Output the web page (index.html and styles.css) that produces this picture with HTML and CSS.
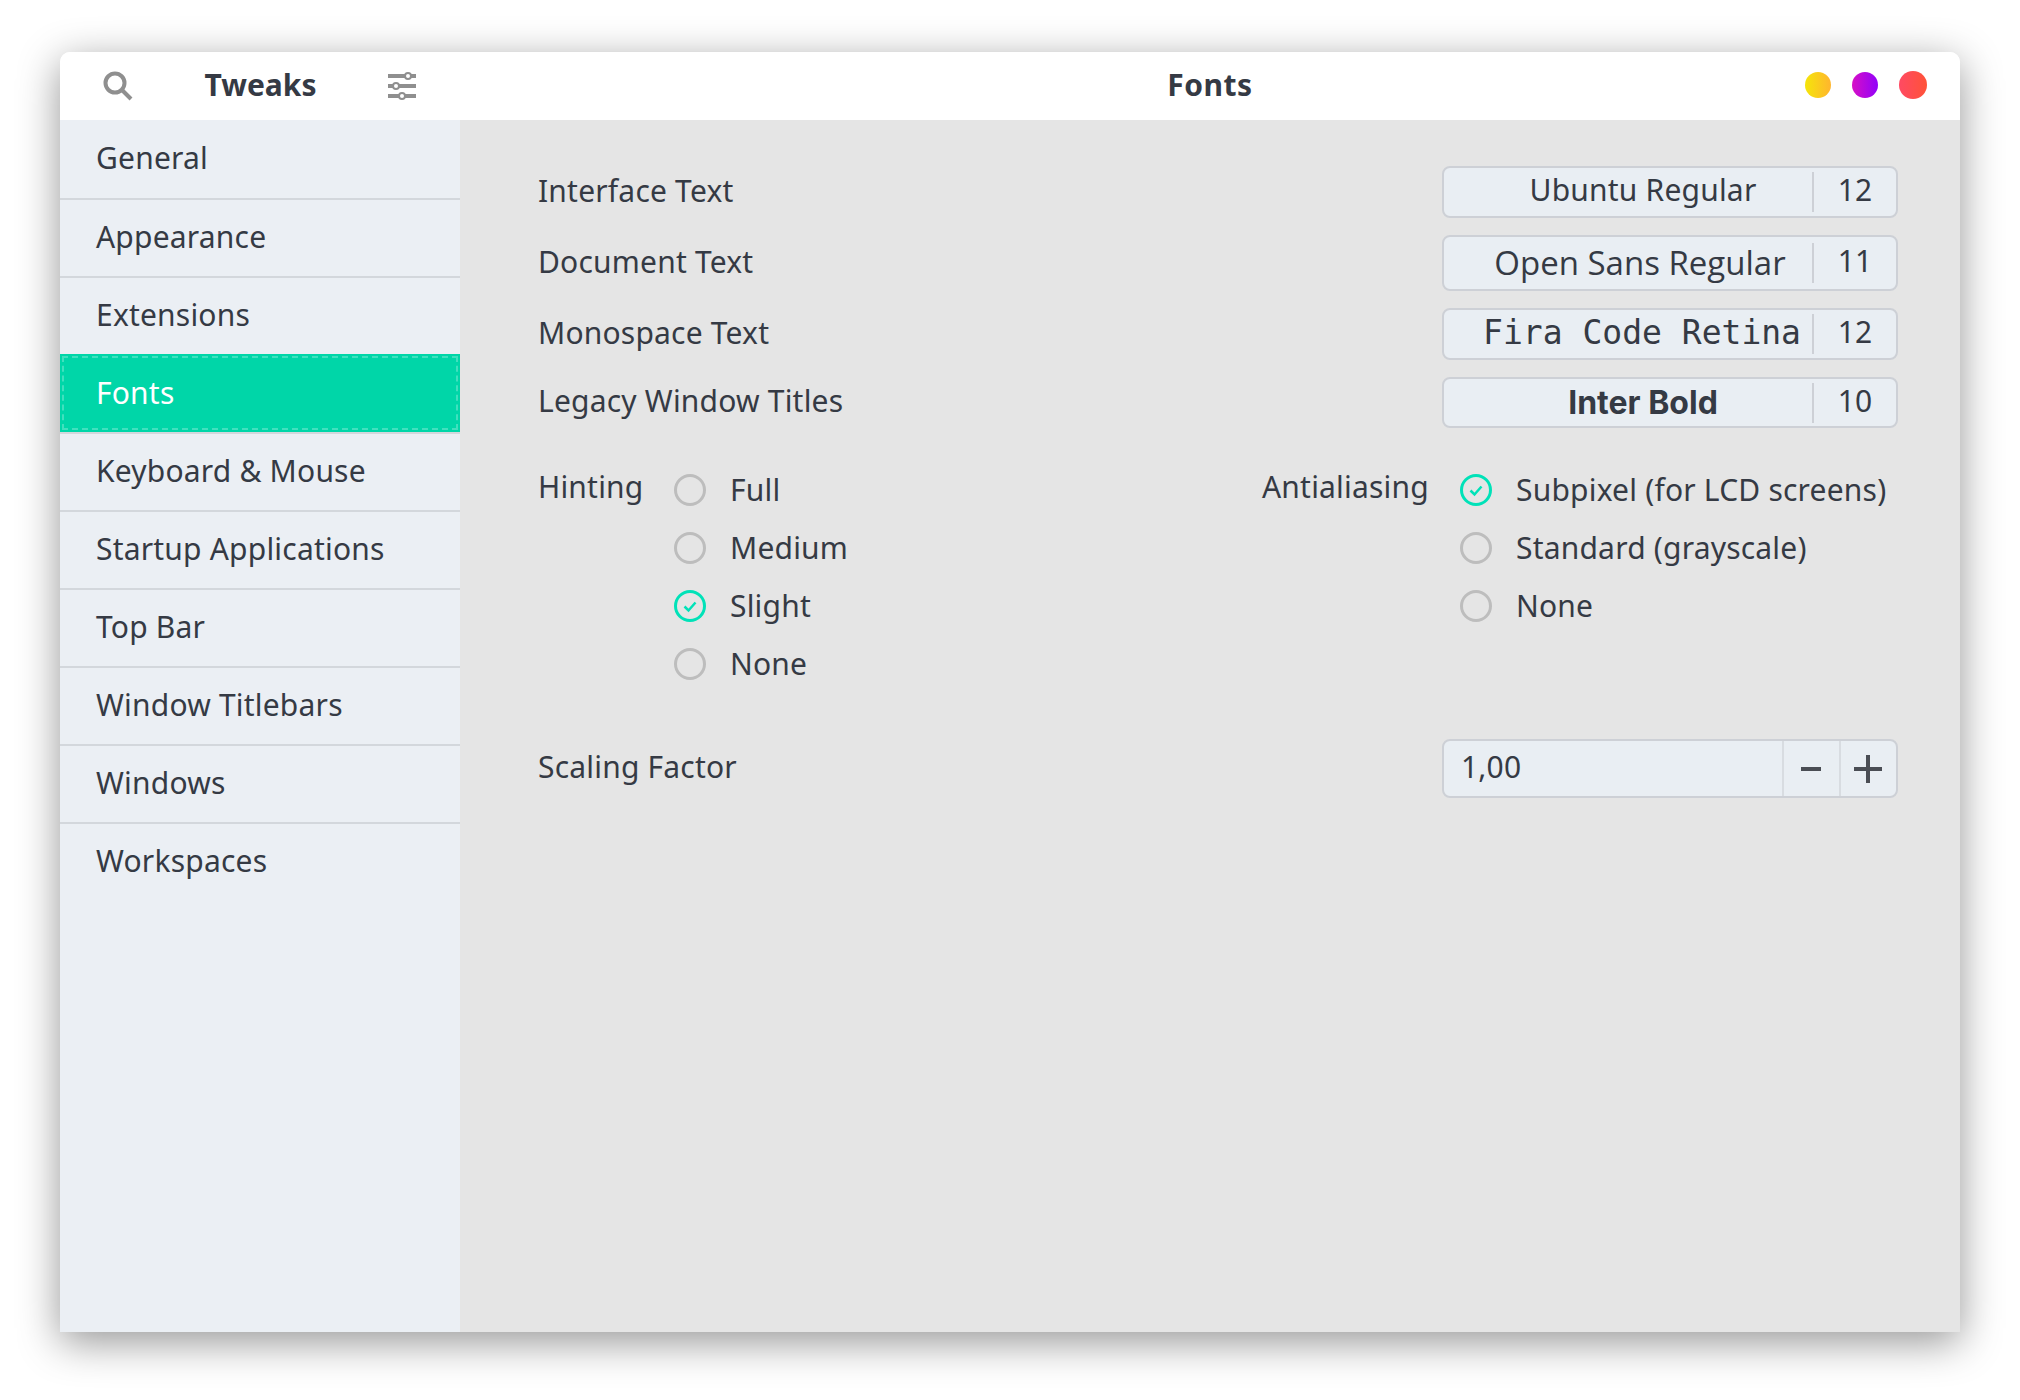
FILE: index.html
```html
<!DOCTYPE html>
<html lang="en">
<head>
  <meta charset="UTF-8">
  <title>Tweaks</title>
  <link rel="stylesheet" href="styles.css">
</head>
<body>
<div class="window">
  <header class="titlebar">
    <div class="titlebar-left">
      <svg class="icon-search" width="30" height="30" viewBox="0 0 30 30">
        <circle cx="12" cy="12" r="9.5" fill="none" stroke="#8f8f8f" stroke-width="4"/>
        <path d="M18.5 18.5L28 28" fill="none" stroke="#8f8f8f" stroke-width="4"/>
      </svg>
      <span class="app-name">Tweaks</span>
      <svg class="icon-sliders" width="28" height="28" viewBox="0 0 28 28">
        <path d="M0 4h28M0 14h28M0 24h28" stroke="#8f8f8f" stroke-width="4"/>
        <circle cx="20" cy="4" r="3" fill="#fff" stroke="#8f8f8f" stroke-width="2"/>
        <circle cx="8" cy="14" r="3" fill="#fff" stroke="#8f8f8f" stroke-width="2"/>
        <circle cx="14" cy="24" r="3" fill="#fff" stroke="#8f8f8f" stroke-width="2"/>
      </svg>
    </div>
    <div class="titlebar-main">
      <span class="page-title">Fonts</span>
      <div class="window-buttons">
        <span class="dot dot-min"></span>
        <span class="dot dot-max"></span>
        <span class="dot dot-close"></span>
      </div>
    </div>
  </header>

  <div class="body">
    <nav class="sidebar">
      <div class="item">General</div>
      <div class="item">Appearance</div>
      <div class="item">Extensions</div>
      <div class="item active">Fonts</div>
      <div class="item">Keyboard &amp; Mouse</div>
      <div class="item">Startup Applications</div>
      <div class="item">Top Bar</div>
      <div class="item">Window Titlebars</div>
      <div class="item">Windows</div>
      <div class="item">Workspaces</div>
    </nav>

    <main class="content">
      <div class="font-row">
        <span class="label">Interface Text</span>
        <div class="font-btn">
          <span class="font-name">Ubuntu Regular</span>
          <span class="font-size">12</span>
        </div>
      </div>
      <div class="font-row">
        <span class="label">Document Text</span>
        <div class="font-btn tall">
          <span class="font-name opensans">Open Sans Regular</span>
          <span class="font-size">11</span>
        </div>
      </div>
      <div class="font-row">
        <span class="label">Monospace Text</span>
        <div class="font-btn">
          <span class="font-name mono">Fira Code Retina</span>
          <span class="font-size">12</span>
        </div>
      </div>
      <div class="font-row">
        <span class="label">Legacy Window Titles</span>
        <div class="font-btn short">
          <span class="font-name inter">Inter Bold</span>
          <span class="font-size">10</span>
        </div>
      </div>

      <div class="options">
        <div class="option-group hinting">
          <span class="label group-label">Hinting</span>
          <div class="radios">
            <div class="radio"><span class="circle"></span><span>Full</span></div>
            <div class="radio"><span class="circle"></span><span>Medium</span></div>
            <div class="radio">
              <svg class="circle-on" width="32" height="32" viewBox="0 0 32 32">
                <circle cx="16" cy="16" r="14.5" fill="none" stroke="#00e2b8" stroke-width="3"/>
                <path d="M10.5 16.5l4 4 7-8" fill="none" stroke="#00e2b8" stroke-width="2.5"/>
              </svg><span>Slight</span>
            </div>
            <div class="radio"><span class="circle"></span><span>None</span></div>
          </div>
        </div>
        <div class="option-group antialiasing">
          <span class="label group-label">Antialiasing</span>
          <div class="radios">
            <div class="radio">
              <svg class="circle-on" width="32" height="32" viewBox="0 0 32 32">
                <circle cx="16" cy="16" r="14.5" fill="none" stroke="#00e2b8" stroke-width="3"/>
                <path d="M10.5 16.5l4 4 7-8" fill="none" stroke="#00e2b8" stroke-width="2.5"/>
              </svg><span>Subpixel (for LCD screens)</span>
            </div>
            <div class="radio"><span class="circle"></span><span>Standard (grayscale)</span></div>
            <div class="radio"><span class="circle"></span><span>None</span></div>
          </div>
        </div>
      </div>

      <div class="font-row scaling">
        <span class="label">Scaling Factor</span>
        <div class="spin">
          <span class="spin-value">1,00</span>
          <span class="spin-btn">
            <svg width="20" height="4" viewBox="0 0 20 4"><path d="M0 2h20" stroke="#4a4d54" stroke-width="4"/></svg>
          </span>
          <span class="spin-btn">
            <svg width="28" height="28" viewBox="0 0 28 28"><path d="M0 14h28M14 0v28" stroke="#4a4d54" stroke-width="4"/></svg>
          </span>
        </div>
      </div>
    </main>
  </div>
</div>
</body>
</html>
```

FILE: styles.css
```css
html {
  background-color: #fff;
}

body {
  margin: 0;
  height: 1400px;
  box-sizing: border-box;
  padding: 52px 60px 68px;
  font-family: "Noto Sans", sans-serif;
  font-size: 30px;
  letter-spacing: 0.2px;
  line-height: 40px;
  color: #353a44;
}

.window {
  width: 1900px;
  height: 1280px;
  border-radius: 10px 10px 0 0;
  box-shadow: 0 10px 42px rgba(0,0,0,0.42);
  display: flex;
  flex-direction: column;
}

.titlebar {
  height: 68px;
  flex: none;
  background-color: #fff;
  border-radius: 10px 10px 0 0;
  display: flex;
}

.titlebar-left {
  width: 400px;
  box-sizing: border-box;
  padding: 0 44px 0 43px;
  display: flex;
  justify-content: space-between;
  align-items: center;
}

.app-name,
.page-title {
  font-weight: 700;
  letter-spacing: 0;
  padding-bottom: 3px;
}

.page-title {
  letter-spacing: 0.5px;
}

.titlebar-main {
  flex: 1;
  position: relative;
  display: flex;
  justify-content: center;
  align-items: center;
}

.window-buttons {
  position: absolute;
  right: 33px;
  top: 19px;
  display: flex;
  align-items: center;
  gap: 21px;
}

.dot {
  width: 26px;
  height: 26px;
  border-radius: 50%;
}

.dot-min { background: linear-gradient(to right, #f5e50a, #ffb52e); }
.dot-max { background: linear-gradient(to right, #d70fc6, #9202fa); }
.dot-close {
  width: 28px;
  height: 28px;
  background: linear-gradient(to right, #ff4a63, #ff5238);
}

.body {
  flex: 1;
  display: flex;
}

.sidebar {
  width: 400px;
  flex: none;
  background-color: #ebeff4;
}

.item {
  height: 78px;
  box-sizing: border-box;
  padding: 0 0 3px 36px;
  display: flex;
  align-items: center;
}

.item + .item {
  border-top: 2px solid #d3d7dc;
}

.sidebar .active {
  background-color: #00d6a8;
  border-top-color: #00d6a8;
  color: #fff;
  outline: 2px dashed rgba(255,255,255,0.25);
  outline-offset: -4px;
}

.content {
  flex: 1;
  background-color: #e5e5e5;
  padding: 46px 62px 0 78px;
}

.font-row {
  display: flex;
  justify-content: space-between;
  align-items: center;
  margin-bottom: 17px;
}

.label {
  padding-bottom: 3px;
}

.font-btn {
  width: 456px;
  height: 52px;
  box-sizing: border-box;
  background-color: #e9eef3;
  border: 2px solid #cdd0d6;
  border-radius: 8px;
  display: flex;
  align-items: center;
}

.font-btn.tall { height: 56px; }
.font-btn.short { height: 51px; }

.font-name {
  flex: 1;
  padding: 0 0 4px 30px;
  text-align: center;
  white-space: nowrap;
}

.opensans {
  font-family: "Open Sans", sans-serif;
  font-size: 33px;
  letter-spacing: 0;
  padding: 0 0 1px 24px;
}

.mono {
  font-family: "DejaVu Sans Mono", monospace;
  font-size: 33px;
  letter-spacing: 0;
  text-align: right;
  padding: 0 11px 3px 0;
}

.inter {
  font-family: Inter, sans-serif;
  font-weight: 700;
  font-size: 32px;
  letter-spacing: 0;
  padding-bottom: 0;
}

.font-size {
  width: 84px;
  height: 40px;
  flex: none;
  border-left: 2px solid #cdd0d6;
  box-sizing: border-box;
  padding-bottom: 4px;
  display: flex;
  justify-content: center;
  align-items: center;
}

.options {
  display: flex;
  margin-top: 46px;
}

.option-group {
  display: flex;
  align-items: flex-start;
}

.hinting { width: 724px; }

.hinting .group-label { width: 136px; }
.antialiasing .group-label { width: 198px; }

.group-label {
  height: 32px;
  padding: 0;
  line-height: 26px;
}

.radios {
  display: flex;
  flex-direction: column;
  gap: 26px;
}

.radio {
  height: 32px;
  display: flex;
  align-items: center;
  white-space: nowrap;
}

.radio span:last-child {
  padding-bottom: 1px;
}

.circle {
  width: 32px;
  height: 32px;
  box-sizing: border-box;
  border: 3px solid #bdbdbd;
  border-radius: 50%;
  margin-right: 24px;
}

.circle-on {
  margin-right: 24px;
}

.scaling {
  margin-top: 59px;
}

.spin {
  width: 456px;
  height: 59px;
  box-sizing: border-box;
  background-color: #e9eef3;
  border: 2px solid #cdd0d6;
  border-radius: 8px;
  display: flex;
  align-items: center;
}

.spin-value {
  flex: 1;
  padding: 0 0 4px 17px;
}

.spin-btn {
  width: 57px;
  height: 100%;
  box-sizing: border-box;
  border-left: 2px solid #d8dce1;
  padding-right: 2px;
  display: flex;
  justify-content: center;
  align-items: center;
}
```
